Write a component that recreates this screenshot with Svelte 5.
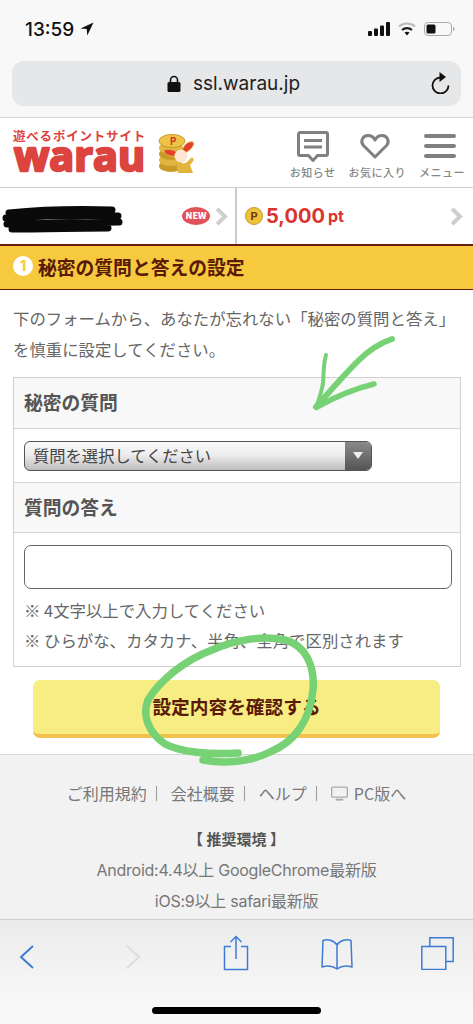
<script>
	const links = ['ご利用規約', '会社概要', 'ヘルプ'];
</script>

<div class="phone">
	<header class="browser">
		<div class="status">
			<span class="time">13:59</span>
			<svg class="loc" width="14" height="14" viewBox="0 0 14 14"><path d="M13.500 .5 .5 6.600l6.200.5.6 6.400z" fill="#111" /></svg>
			<svg class="signal" width="22" height="14" viewBox="0 0 22 14" fill="#111">
				<rect x="0" y="9" width="4" height="5" rx="1" />
				<rect x="6" y="6.500" width="4" height="7.500" rx="1" />
				<rect x="12" y="3.500" width="4" height="10.500" rx="1" />
				<rect x="18" y="0" width="4" height="14" rx="1" />
			</svg>
			<svg class="wifi" width="18" height="14" viewBox="0 0 18 14">
				<path d="M1 4.500c4.500-4 11.500-4 16 0" fill="none" stroke="#bbb" stroke-width="2.200" />
				<path d="M4 8c2.800-2.500 7.200-2.500 10 0" fill="none" stroke="#222" stroke-width="2.200" />
				<path d="M6.500 10.500 9 13.500l2.500-3c-1.500-1.100-3.500-1.100-5 0z" fill="#111" />
			</svg>
			<svg class="battery" width="31" height="14" viewBox="0 0 31 14">
				<rect x=".5" y=".5" width="27" height="13" rx="3.500" fill="none" stroke="#aaa" />
				<rect x="2.500" y="2.500" width="9" height="9" rx="1.500" fill="#111" />
				<path d="M29 5c1 .3 1.500 1 1.500 2S30 8.700 29 9z" fill="#aaa" />
			</svg>
		</div>
		<div class="urlbar">
			<svg width="14" height="17" viewBox="0 0 14 17">
				<path d="M3.500 8V5a3.500 3.500 0 0 1 7 0v3" fill="none" stroke="#111" stroke-width="1.600" />
				<rect x=".5" y="7" width="13" height="10" rx="1.500" fill="#111" />
			</svg>
			<span>ssl.warau.jp</span>
			<svg class="reload" width="20" height="22" viewBox="0 0 20 22">
				<path d="M10.500 5.500a8 8 0 1 0 8 8" fill="none" stroke="#111" stroke-width="1.800" />
				<path d="M9.500 0 16 5l-6.500 5z" fill="#111" />
			</svg>
		</div>
	</header>

	<div class="sitehead">
		<div class="logo">
			<div class="tag">遊べるポイントサイト</div>
			<svg class="word" width="136" height="28" viewBox="0 0 136 28">
				<text x="1" y="26.400" textLength="131" lengthAdjust="spacingAndGlyphs">warau</text>
			</svg>
		</div>
		<svg class="mascot" width="38" height="40" viewBox="0 0 38 40">
			<ellipse cx="13" cy="32" rx="12" ry="6" fill="#c99a28" />
			<ellipse cx="13" cy="26" rx="12" ry="6" fill="#e0b440" />
			<ellipse cx="13" cy="20" rx="12" ry="6" fill="#c99a28" />
			<ellipse cx="13" cy="14" rx="12" ry="6" fill="#e0b440" />
			<ellipse cx="14" cy="7" rx="13" ry="6.500" fill="#edc445" stroke="#c99a28" />
			<text x="15" y="10.500" class="coin-p">P</text>
			<path d="M24 17c2-7 7-10 11-9 2 3-2 8-8 11z" fill="#e2402c" stroke="#e0b440" />
			<path d="M20 19c-4-4-10-4-14-3 0 5 7 7 13 6z" fill="#e2402c" stroke="#e0b440" />
			<circle cx="23" cy="22" r="6.500" fill="#fbe7d3" />
			<path d="M18 28c2 2 8 2 11 0l5-5 2 3-4 5 3 8H20z" fill="#e3b53c" />
		</svg>
		<nav class="sitenav">
			<div class="navitem">
				<svg width="32" height="32" viewBox="0 0 32 32" fill="none" stroke="#808080" stroke-width="3">
					<path d="M3 1.500h26a1.500 1.500 0 0 1 1.500 1.500v20a1.500 1.500 0 0 1-1.500 1.500h-8.500l-4.500 5-4.500-5H3A1.500 1.500 0 0 1 1.500 23V3A1.500 1.500 0 0 1 3 1.500z" stroke-linejoin="round" />
					<path d="M7 9.500h18M7 16h18" />
				</svg>
				<span>お知らせ</span>
			</div>
			<div class="navitem nudge">
				<svg width="32" height="32" viewBox="0 0 32 32" fill="none" stroke="#808080" stroke-width="3">
					<path d="M16 26 4.500 14.500c-3.500-4-1-10 4.500-10 3 0 5.500 1.500 7 4.500 1.500-3 4-4.500 7-4.500 5.500 0 8 6 4.500 10z" stroke-linejoin="round" />
				</svg>
				<span>お気に入り</span>
			</div>
			<div class="navitem nudge">
				<svg width="32" height="32" viewBox="0 0 32 32" fill="#808080">
					<rect x="0" y="3" width="32" height="4" rx="2" />
					<rect x="0" y="13" width="32" height="4" rx="2" />
					<rect x="0" y="23" width="32" height="4" rx="2" />
				</svg>
				<span>メニュー</span>
			</div>
		</nav>
	</div>

	<div class="account">
		<div class="cell user">
			<span class="new">NEW</span>
			<span class="chev"></span>
		</div>
		<div class="cell points">
			<span class="coin">P</span>
			<span class="amount">5,000</span>
			<span class="unit">pt</span>
			<span class="chev end"></span>
		</div>
	</div>

	<h1 class="band"><span class="num">1</span>秘密の質問と答えの設定</h1>

	<main class="content">
		<p class="lead">下のフォームから、あなたが忘れない「秘密の質問と答え」<br />を慎重に設定してください。</p>

		<div class="form">
			<div class="label">秘密の質問</div>
			<div class="field">
				<div class="select">
					<span>質問を選択してください</span>
					<span class="arrow"></span>
				</div>
			</div>
			<div class="label second">質問の答え</div>
			<div class="field answer">
				<div class="input"></div>
				<p>※ 4文字以上で入力してください</p>
				<p>※ ひらがな、カタカナ、半角、全角で区別されます</p>
			</div>
		</div>

		<div class="submit">設定内容を確認する</div>
	</main>

	<footer class="foot">
		<div class="links">
			{#each links as link}
				<span>{link}</span><i></i>
			{/each}
			<svg width="17" height="15" viewBox="0 0 18 15">
				<rect x=".7" y=".7" width="16.600" height="10.600" rx="1" fill="none" stroke="#aaa" stroke-width="1.400" />
				<path d="M5 15v-2h8v2z" fill="#aaa" />
			</svg>
			<span class="pc">PC版へ</span>
		</div>
		<div class="env">【 推奨環境 】</div>
		<div class="envline">Android:4.4以上 GoogleChrome最新版</div>
		<div class="envline">iOS:9以上 safari最新版</div>
	</footer>

	<div class="toolbar">
		<svg class="t-back" width="16" height="26" viewBox="0 0 16 26" fill="none" stroke="#3f7bd6" stroke-width="2"><path d="M14 2 2 13l12 11" /></svg>
		<svg class="t-fwd" width="16" height="26" viewBox="0 0 16 26" fill="none" stroke="#dcdcdc" stroke-width="2"><path d="M2 2l12 11L2 24" /></svg>
		<svg class="t-share" width="26" height="36" viewBox="0 0 26 36" fill="none" stroke="#3f7bd6" stroke-width="1.500">
			<path d="M8 11.500H1.500v23h23v-23H18" />
			<path d="M13 24V2M7.500 7 13 1.500 18.500 7" />
		</svg>
		<svg class="t-book" width="32" height="32" viewBox="0 0 32 32" fill="none" stroke="#3f7bd6" stroke-width="1.500">
			<path d="M16 7C13 2 6 1 2 2.500L1 29c5-1.500 11-1 15 2 4-3 10-3.500 15-2L30 2.500C26 1 19 2 16 7zM16 7v24" stroke-linejoin="round" />
		</svg>
		<svg class="t-tabs" width="33" height="33" viewBox="0 0 33 33" fill="none" stroke="#3f7bd6" stroke-width="1.500">
			<rect x=".8" y="9.500" width="24" height="23" />
			<path d="M8.800 9.500V.8h23.400V24.500H24.800" />
		</svg>
		<span class="homebar"></span>
	</div>

	<!-- hand-drawn markup on top of the screenshot -->
	<svg class="ink" width="473" height="1024" viewBox="0 0 473 1024" fill="none">
		<path d="M9 213c30-3 70-4 103-3M6 218c35-2 80-3 112-2M7 224c35 0 75-2 112-2M12 229c30 0 70-1 96-1" stroke="#0a0a0a" stroke-width="7" stroke-linecap="round" />
		<g stroke="#77d175" stroke-linecap="round" stroke-linejoin="round">
			<path d="M392 339c-12 4-24 12-34 22-14 14-28 30-42 46" stroke-width="6" />
			<path d="M326 355c-3 10-2 18-3 28-1 8-4 16-7 25" stroke-width="4" />
			<path d="M317 407c18-10 36-18 57-23" stroke-width="5.500" />
			<path d="M203 760C225 764 250 762 270 752 295 742 310 720 313 690 315 665 305 645 285 640 262 635 235 640 212 650 185 660 160 680 148 700 142 715 148 732 165 744 180 752 210 755 238 753" stroke-width="7.500" />
		</g>
	</svg>
</div>

<style>
	:global(body) {
		background: #fff;
	}
	.phone {
		position: relative;
		width: 473px;
		height: 1024px;
		overflow: hidden;
		display: flex;
		flex-direction: column;
		font-family: 'Noto Sans CJK JP', sans-serif;
		color: #666;
		background: #fff;
	}
	.browser {
		height: 118px;
		box-sizing: border-box;
		background: #f8f8f8;
		border-bottom: 1px solid #d4d4d4;
		padding: 0 12px;
		flex: none;
	}
	.status {
		height: 61px;
		display: flex;
		align-items: center;
		padding: 0 6px 3px 13px;
		box-sizing: border-box;
		color: #111;
	}
	.time {
		font-family: Inter, sans-serif;
		font-size: 19px;
		font-weight: 500;
		width: 55px;
	}
	.loc {
		margin-right: auto;
	}
	.wifi {
		margin: 0 8px;
	}
	.urlbar {
		position: relative;
		height: 45px;
		border-radius: 12px;
		background: #e6e7e9;
		display: flex;
		align-items: center;
		justify-content: center;
		gap: 12px;
		font-family: Inter, sans-serif;
		font-size: 19px;
		color: #222;
		padding-right: 6px;
	}
	.reload {
		position: absolute;
		right: 11px;
		top: 11px;
	}
	.sitehead {
		height: 70px;
		flex: none;
		box-sizing: border-box;
		display: flex;
		align-items: flex-start;
		padding: 0 8px 0 13px;
		border-bottom: 1px solid #ccc;
	}
	.logo {
		width: 145px;
		color: #dc4440;
	}
	.tag {
		margin: 10px 0 1px;
		font-size: 12.500px;
		font-weight: 700;
		line-height: 16px;
		letter-spacing: 0.8px;
		white-space: nowrap;
	}
	.word {
		display: block;
		overflow: visible;
	}
	.word text {
		font-family: 'Open Sans', sans-serif;
		font-size: 42px;
		font-weight: 700;
		fill: #dc4440;
		stroke: #dc4440;
		stroke-width: 2.500px;
		stroke-linejoin: round;
	}
	.mascot {
		margin-top: 16px;
	}
	.coin-p {
		font-size: 10px;
		font-weight: 700;
		fill: #d23a1e;
		text-anchor: middle;
	}
	.sitenav {
		margin-left: auto;
		display: flex;
		gap: 13px;
		padding-top: 13px;
	}
	.navitem {
		display: flex;
		flex-direction: column;
		align-items: center;
		font-size: 11px;
		font-weight: 500;
		color: #888;
		letter-spacing: 0.5px;
		line-height: 16px;
	}
	.navitem span {
		margin-top: 1px;
	}
	.nudge svg {
		margin-right: 4px;
	}
	.account {
		height: 56px;
		flex: none;
		display: flex;
	}
	.cell {
		position: relative;
		display: flex;
		align-items: center;
	}
	.user {
		width: 237px;
		box-sizing: border-box;
		border-right: 2px solid #ccc;
		justify-content: flex-end;
		padding-right: 7px;
		gap: 3px;
	}
	.new {
		width: 28px;
		height: 18px;
		border-radius: 50%;
		background: #e2525a;
		color: #fff;
		font-size: 9px;
		font-weight: 900;
		line-height: 18px;
		text-align: center;
	}
	.chev {
		width: 9px;
		height: 9px;
		margin: 0 3px 0 -1px;
		border: solid #cfcfcf;
		border-width: 4px 4px 0 0;
		transform: rotate(45deg);
	}
	.points {
		flex: 1;
		padding-left: 8px;
		color: #d9352f;
		font-family: Inter, sans-serif;
		font-weight: 700;
	}
	.coin {
		width: 16px;
		height: 16px;
		border-radius: 50%;
		background: #f0c23a;
		border: 1px solid #c69a28;
		color: #6b3a10;
		font-size: 11px;
		line-height: 16px;
		text-align: center;
		margin-right: 3px;
	}
	.amount {
		font-size: 20px;
	}
	.unit {
		font-size: 16px;
		margin-left: 3px;
	}
	.chev.end {
		margin-left: auto;
		margin-right: 13px;
	}
	.band {
		margin: 0;
		height: 46px;
		flex: none;
		box-sizing: border-box;
		background: #f7c93e;
		border-top: 2px solid #6b1c10;
		border-bottom: 1px solid #6b1c10;
		padding-bottom: 3px;
		display: flex;
		align-items: center;
		gap: 5px;
		padding-left: 13px;
		font-size: 18.800px;
		font-weight: 700;
		color: #5a1a08;
	}
	.num {
		width: 20px;
		height: 20px;
		border-radius: 50%;
		background: #fff;
		color: #f7c93e;
		font-family: Inter, sans-serif;
		font-size: 14px;
		line-height: 20px;
		text-align: center;
		font-weight: 800;
	}
	.content {
		flex: none;
		height: 464px;
		box-sizing: border-box;
		padding: 0 13px;
	}
	.lead {
		margin: 13px 0 13px;
		font-size: 16.400px;
		line-height: 30.500px;
		white-space: nowrap;
	}
	.form {
		border: 1px solid #d0d0d0;
		width: 448px;
		box-sizing: border-box;
	}
	.label {
		height: 51px;
		box-sizing: border-box;
		background: #f8f8f8;
		border-bottom: 1px solid #d4d4d4;
		padding-left: 10px;
		font-size: 18.800px;
		font-weight: 700;
		line-height: 48px;
		color: #555;
	}
	.label.second {
		border-top: 1px solid #d4d4d4;
	}
	.field {
		height: 53px;
		box-sizing: border-box;
		padding: 12px 8px 0 10px;
	}
	.select {
		width: 348px;
		height: 30px;
		box-sizing: border-box;
		border: 1px solid #555;
		border-radius: 6px;
		background: linear-gradient(#fafafa, #ededed 45%, #bdbdbd);
		display: flex;
		justify-content: space-between;
		overflow: hidden;
		font-size: 16.300px;
		line-height: 27px;
		color: #444;
		padding-left: 8px;
	}
	.arrow {
		position: relative;
		width: 26px;
		background: linear-gradient(#8a8a8a, #555);
	}
	.arrow::after {
		content: '';
		position: absolute;
		left: 8px;
		top: 10px;
		border: solid transparent;
		border-width: 7px 5px 0;
		border-top-color: #eee;
	}
	.answer {
		height: 133px;
	}
	.input {
		height: 44px;
		box-sizing: border-box;
		border: 1px solid #666;
		border-radius: 7px;
		background: #fff;
		margin-bottom: 6px;
	}
	.answer p {
		margin: 0;
		font-size: 16.400px;
		line-height: 30px;
		white-space: nowrap;
	}
	.submit {
		width: 407px;
		height: 58px;
		box-sizing: border-box;
		margin: 13px 0 0 20px;
		background: #f7ed83;
		border-bottom: 4px solid #f2c14e;
		border-radius: 7px;
		font-size: 18.700px;
		font-weight: 700;
		line-height: 52px;
		text-align: center;
		color: #5a1a08;
	}
	.foot {
		flex: 1;
		border-top: 1px solid #d8d8d8;
		background: #f2f2f2;
		text-align: center;
		color: #777;
		font-size: 16px;
	}
	.links {
		display: flex;
		align-items: center;
		justify-content: center;
		height: 24px;
		margin-top: 26px;
		white-space: nowrap;
		font-size: 16px;
	}
	.links i {
		width: 1px;
		height: 15px;
		background: #999;
		margin: 0 14px 0 9px;
	}
	.links svg {
		margin-right: 6px;
	}
	.env {
		margin-top: 22px;
		font-size: 15px;
		font-weight: 700;
		line-height: 24px;
		color: #555;
	}
	.envline {
		font-family: Inter, 'Noto Sans CJK JP', sans-serif;
		line-height: 30.500px;
		font-size: 16px;
		letter-spacing: -0.25px;
	}
	.env + .envline {
		margin-top: 4px;
	}
	.toolbar {
		position: relative;
		height: 105px;
		flex: none;
		box-sizing: border-box;
		border-top: 1px solid #cfcfcf;
		background: linear-gradient(#ebebeb, #f9f9f9 85%);
		display: flex;
		align-items: flex-start;
		padding-top: 18px;
	}
	.t-back {
		margin: 6px 0 0 19px;
	}
	.t-fwd {
		margin: 6px 0 0 90px;
	}
	.t-share {
		margin: -3px 0 0 82px;
	}
	.t-book {
		margin: 0 0 0 72px;
	}
	.t-tabs {
		margin: -1px 0 0 68px;
	}
	.homebar {
		position: absolute;
		left: 152px;
		top: 87px;
		width: 169px;
		height: 7px;
		border-radius: 4px;
		background: #000;
	}
	.ink {
		position: absolute;
		left: 0;
		top: 0;
		pointer-events: none;
	}
</style>
